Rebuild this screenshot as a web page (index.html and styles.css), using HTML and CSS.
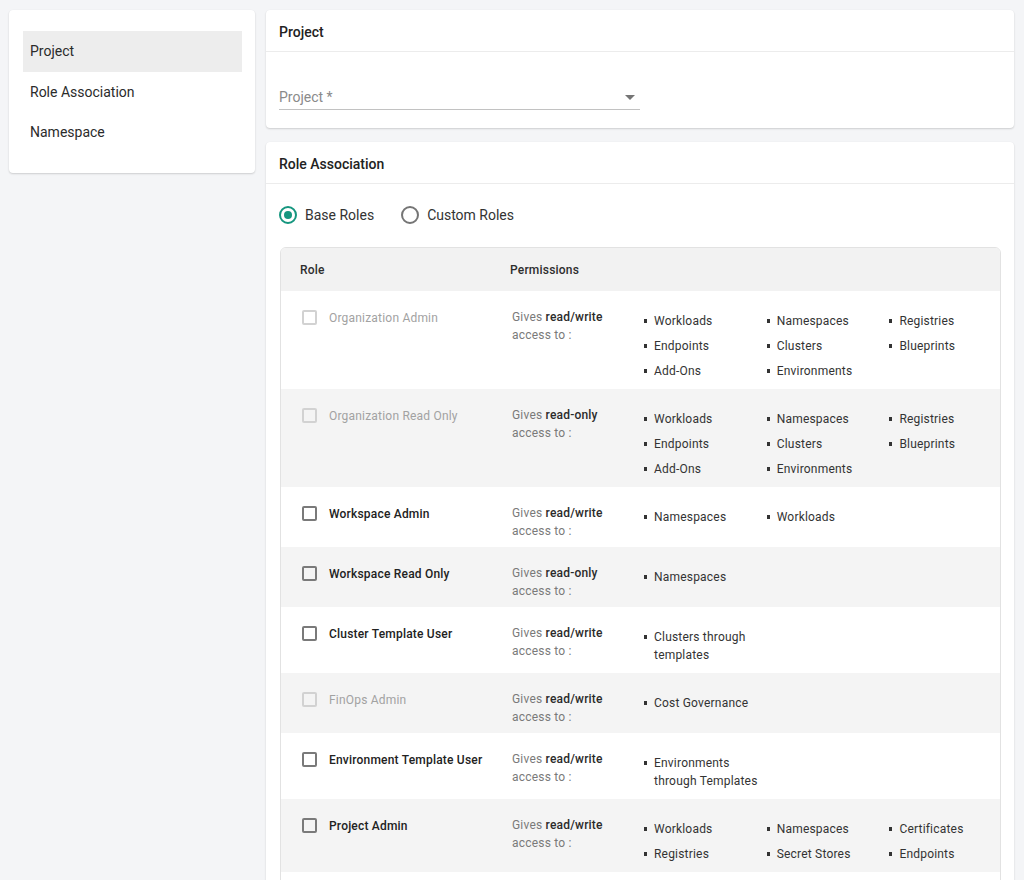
FILE: index.html
```html
<!DOCTYPE html>
<html lang="en">
<head>
<meta charset="utf-8">
<title>Role Association</title>
<link rel="stylesheet" href="styles.css">
</head>
<body>
<div class="layout">
  <aside class="card nav">
    <ul class="nav-list">
      <li class="nav-item active">Project</li>
      <li class="nav-item">Role Association</li>
      <li class="nav-item">Namespace</li>
    </ul>
  </aside>
  <main class="main">
    <section class="card">
      <div class="card-header">Project</div>
      <div class="card-body project-body">
        <div class="select">
          <span class="select-label">Project *</span>
          <svg class="select-arrow" width="10" height="5" viewBox="0 0 10 5"><path d="M0 0l5 5 5-5z" fill="#757575"/></svg>
        </div>
      </div>
    </section>
    <section class="card">
      <div class="card-header">Role Association</div>
      <div class="card-body roles-body">
        <div class="radios">
          <label class="radio checked"><span class="radio-circle"></span><span>Base Roles</span></label>
          <label class="radio"><span class="radio-circle"></span><span>Custom Roles</span></label>
        </div>
        <div class="table">
          <div class="row head">
            <div class="cell role-cell">Role</div>
            <div class="cell">Permissions</div>
          </div>

          <div class="row disabled">
            <div class="cell role-cell"><span class="checkbox"></span><span class="role-name">Organization Admin</span></div>
            <div class="cell perm-cell">
              <div class="gives">Gives <b>read/write</b> access to :</div>
              <ul class="bullets">
                <li>Workloads</li><li>Namespaces</li><li>Registries</li>
                <li>Endpoints</li><li>Clusters</li><li>Blueprints</li>
                <li>Add-Ons</li><li>Environments</li>
              </ul>
            </div>
          </div>

          <div class="row alt disabled">
            <div class="cell role-cell"><span class="checkbox"></span><span class="role-name">Organization Read Only</span></div>
            <div class="cell perm-cell">
              <div class="gives">Gives <b>read-only</b> access to :</div>
              <ul class="bullets">
                <li>Workloads</li><li>Namespaces</li><li>Registries</li>
                <li>Endpoints</li><li>Clusters</li><li>Blueprints</li>
                <li>Add-Ons</li><li>Environments</li>
              </ul>
            </div>
          </div>

          <div class="row">
            <div class="cell role-cell"><span class="checkbox"></span><span class="role-name">Workspace Admin</span></div>
            <div class="cell perm-cell">
              <div class="gives">Gives <b>read/write</b> access to :</div>
              <ul class="bullets">
                <li>Namespaces</li><li>Workloads</li>
              </ul>
            </div>
          </div>

          <div class="row alt">
            <div class="cell role-cell"><span class="checkbox"></span><span class="role-name">Workspace Read Only</span></div>
            <div class="cell perm-cell">
              <div class="gives">Gives <b>read-only</b> access to :</div>
              <ul class="bullets">
                <li>Namespaces</li>
              </ul>
            </div>
          </div>

          <div class="row">
            <div class="cell role-cell"><span class="checkbox"></span><span class="role-name">Cluster Template User</span></div>
            <div class="cell perm-cell">
              <div class="gives">Gives <b>read/write</b> access to :</div>
              <ul class="bullets">
                <li>Clusters through templates</li>
              </ul>
            </div>
          </div>

          <div class="row alt disabled">
            <div class="cell role-cell"><span class="checkbox"></span><span class="role-name">FinOps Admin</span></div>
            <div class="cell perm-cell">
              <div class="gives">Gives <b>read/write</b> access to :</div>
              <ul class="bullets">
                <li>Cost Governance</li>
              </ul>
            </div>
          </div>

          <div class="row">
            <div class="cell role-cell"><span class="checkbox"></span><span class="role-name">Environment Template User</span></div>
            <div class="cell perm-cell">
              <div class="gives">Gives <b>read/write</b> access to :</div>
              <ul class="bullets">
                <li>Environments through Templates</li>
              </ul>
            </div>
          </div>

          <div class="row alt">
            <div class="cell role-cell"><span class="checkbox"></span><span class="role-name">Project Admin</span></div>
            <div class="cell perm-cell">
              <div class="gives">Gives <b>read/write</b> access to :</div>
              <ul class="bullets">
                <li>Workloads</li><li>Namespaces</li><li>Certificates</li>
                <li>Registries</li><li>Secret Stores</li><li>Endpoints</li>
              </ul>
            </div>
          </div>

          <div class="row">
            <div class="cell role-cell"><span class="checkbox"></span><span class="role-name">Project Read Only</span></div>
            <div class="cell perm-cell">
              <div class="gives">Gives <b>read-only</b> access to :</div>
              <ul class="bullets">
                <li>Workloads</li><li>Namespaces</li><li>Certificates</li>
                <li>Registries</li><li>Secret Stores</li><li>Endpoints</li>
              </ul>
            </div>
          </div>
        </div>
      </div>
    </section>
  </main>
</div>
</body>
</html>
```

FILE: styles.css
```css
* { box-sizing: border-box; }

html, body {
  margin: 0;
  padding: 0;
  background: #f4f5f7;
  font-family: Roboto, "Liberation Sans", Arial, sans-serif;
  color: #333;
}

.layout {
  display: flex;
  align-items: flex-start;
  gap: 11px;
  padding: 10px 10px 0 9px;
}

.card {
  background: #fff;
  border-radius: 4px;
  box-shadow: 0 1px 2px rgba(0, 0, 0, 0.16), 0 0 1px rgba(0, 0, 0, 0.05);
}

/* Sidebar */
.nav {
  width: 246px;
  flex: none;
  padding: 21px 13px 20.5px 14px;
}

.nav-list {
  list-style: none;
  margin: 0;
  padding: 0;
}

.nav-item {
  height: 40.5px;
  line-height: 40px;
  padding-left: 7px;
  font-size: 14px;
  color: #2b2b2b;
}

.nav-item.active {
  background: #ededed;
}

/* Main */
.main {
  flex: 1;
  display: flex;
  flex-direction: column;
  gap: 14px;
  min-width: 0;
}

.card-header {
  padding: 12px 13px 9px;
  line-height: 20px;
  font-size: 14px;
  font-weight: 500;
  color: #222;
  border-bottom: 1px solid #ececec;
}

.project-body {
  padding: 35px 13px 18px;
}

.select {
  width: 361px;
  display: flex;
  align-items: center;
  justify-content: space-between;
  height: 23px;
  padding: 0 5px 3px 0;
  border-bottom: 1px solid #c2c2c2;
}

.select-label {
  font-size: 14px;
  line-height: 20px;
  color: #8a8a8a;
}

.select-arrow {
  display: block;
  margin-top: 2px;
}

.roles-body {
  padding: 21px 13px 0;
}

.radios {
  display: flex;
  align-items: center;
  gap: 27px;
  height: 20px;
}

.radio {
  display: flex;
  align-items: center;
  gap: 8px;
  font-size: 14px;
  color: #333;
}

.radio-circle {
  width: 18px;
  height: 18px;
  border: 2px solid #757575;
  border-radius: 50%;
  display: flex;
  align-items: center;
  justify-content: center;
}

.radio.checked .radio-circle {
  border-color: #16967f;
}

.radio.checked .radio-circle::after {
  content: "";
  width: 8px;
  height: 8px;
  border-radius: 50%;
  background: #16967f;
}

/* Table */
.table {
  margin-top: 22px;
  margin-left: 1px;
  border: 1px solid #e2e2e2;
  border-radius: 6px 6px 0 0;
  overflow: hidden;
  font-size: 12px;
  letter-spacing: 0.2px;
}

.row {
  display: grid;
  grid-template-columns: 210px 1fr;
  padding: 17px 0 7px;
  background: #fff;
}

.row.alt {
  background: #f4f4f4;
}

.row.head {
  background: #f2f2f2;
  height: 43px;
  padding: 0;
  align-items: center;
  font-weight: 500;
  color: #2e2e2e;
}

.row.head .cell {
  padding-left: 19px;
}

.cell {
  padding-left: 21px;
  line-height: 18px;
}

.role-cell {
  display: flex;
  align-items: flex-start;
}

.row:not(.head) .role-cell {
  padding-top: 1px;
}

.checkbox {
  flex: none;
  width: 15px;
  height: 15px;
  margin-top: 1px;
  border: 2px solid #7a7a7a;
  border-radius: 2px;
  margin-right: 12px;
}

.role-name {
  font-weight: 500;
  color: #222;
}

.row.disabled .checkbox {
  border-color: #d2d2d2;
}

.row.disabled .role-name {
  font-weight: 400;
  color: #a2a2a2;
}

.perm-cell {
  display: flex;
  align-items: flex-start;
}

.gives {
  width: 112px;
  margin-right: 20px;
  color: #7a7a7a;
  flex: none;
}

.gives b {
  font-weight: 500;
  color: #2b2b2b;
}

.bullets {
  list-style: none;
  margin: 3.5px 0 2.5px;
  padding: 0;
  display: grid;
  grid-template-columns: 122.7px 122.7px 110px;
  row-gap: 7px;
}

.bullets li {
  position: relative;
  padding-left: 10px;
  padding-right: 4px;
  color: #333;
}

.bullets li::before {
  content: "";
  position: absolute;
  left: 0;
  top: 7px;
  width: 3px;
  height: 4px;
  background: #333;
}
```
